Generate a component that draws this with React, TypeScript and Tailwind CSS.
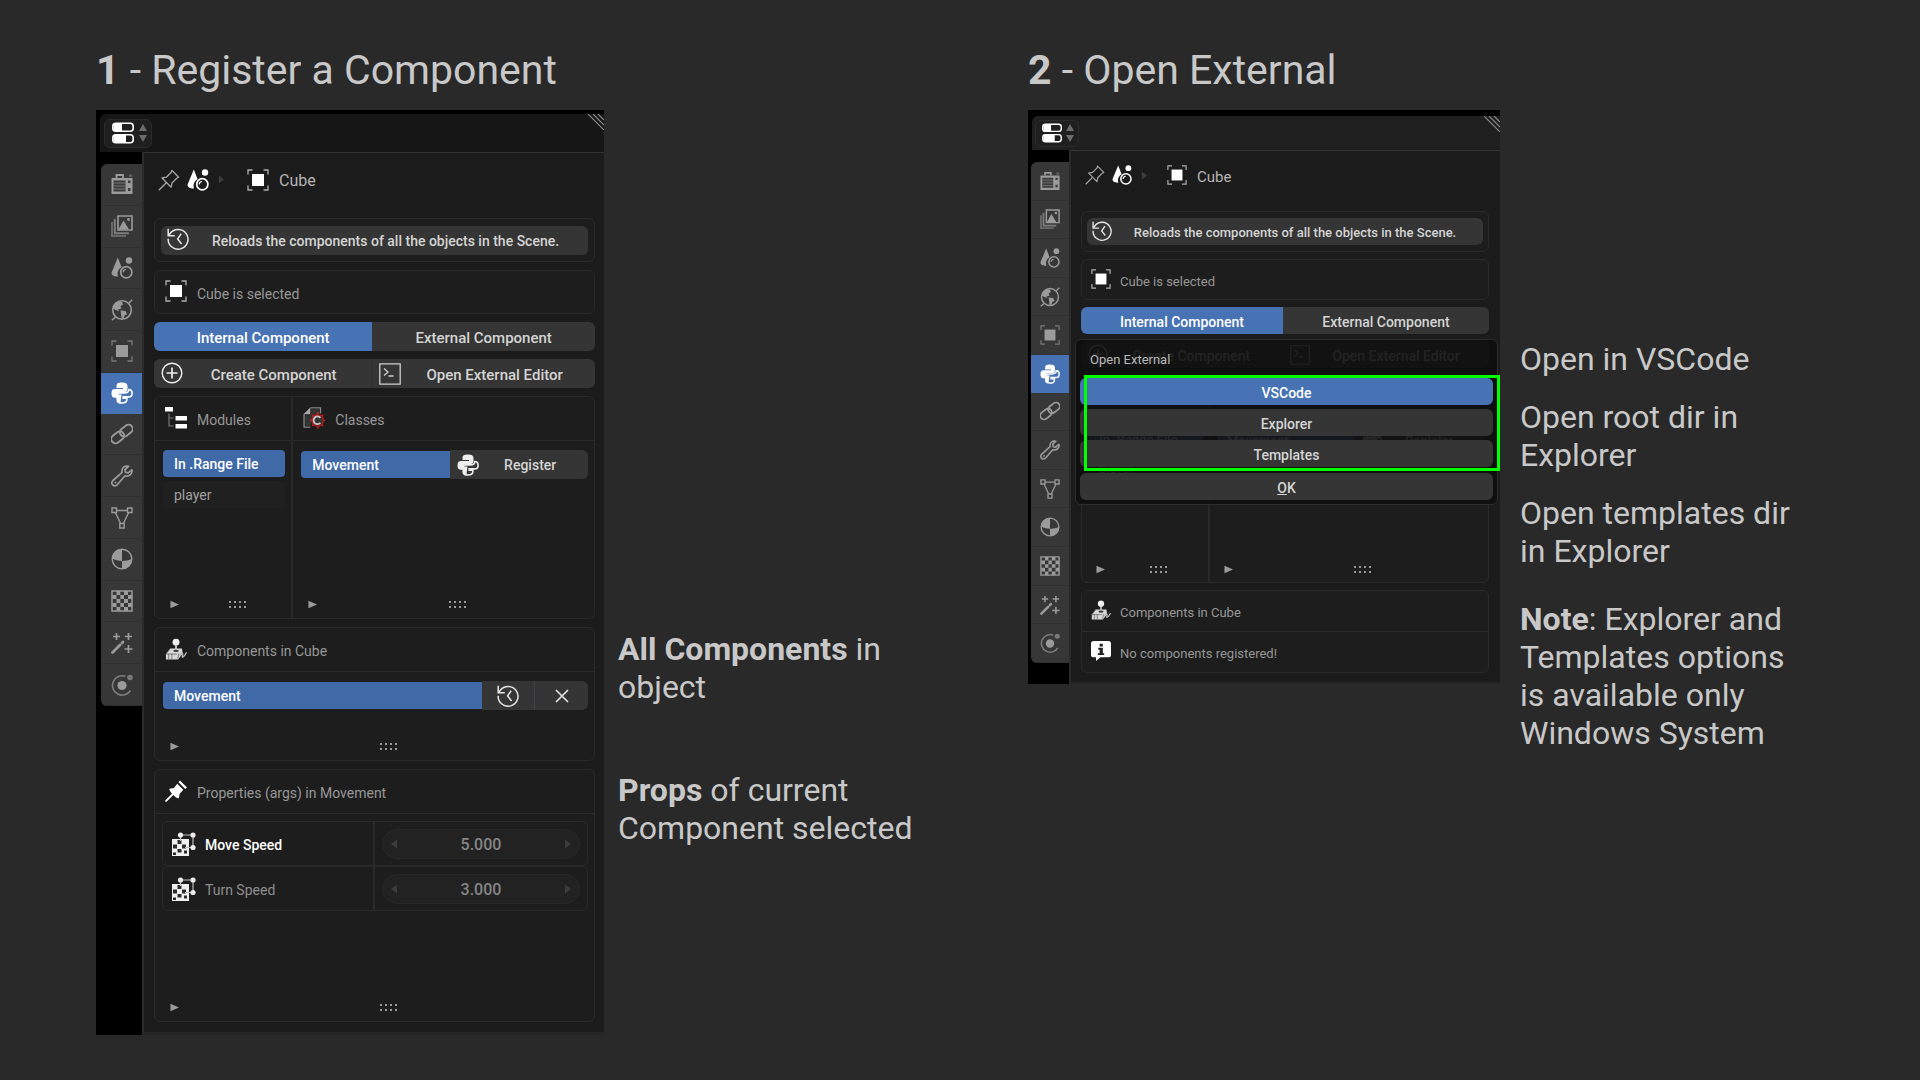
import React from "react";

type IconProps = { className?: string };
type IconType = (p: IconProps) => React.ReactElement;

function Svg({ className, children, box = 22 }: { className?: string; children: React.ReactNode; box?: number }) {
  return (
    <svg viewBox={`0 0 ${box} ${box}`} fill="none" stroke="none" aria-hidden="true" className={`shrink-0 ${className ?? ""}`}>
      {children}
    </svg>
  );
}

/* ---------- sidebar icons ---------- */

const RenderIcon: IconType = (p) => (
  <Svg {...p}>
    <path d="M5.500 5V2h6.500v3" stroke="currentColor" strokeWidth="1.800" />
    <path d="M0.500 5h21V21h-21z" fill="currentColor" />
    <path d="M2.500 7.500h12v11h-12zM17 7.500h2.500V10H17zM17 15h2.500v3H17z" fill="#3c3c3c" />
    <path d="M2.500 10h12M2.500 13h12M2.500 16h12" stroke="currentColor" strokeWidth="0.600" />
    <path d="M18 1.500h3v2.500h-3z" fill="currentColor" opacity="0.400" />
  </Svg>
);

const ViewLayerIcon: IconType = (p) => (
  <Svg {...p}>
    <path d="M1 7v14h14" stroke="currentColor" strokeWidth="2" opacity="0.500" />
    <path d="M3.800 4v14.200h14" stroke="currentColor" strokeWidth="2" opacity="0.700" />
    <path d="M7 1h14v14H7z" stroke="currentColor" strokeWidth="1.600" />
    <path d="M7.500 14.500l5-9 5.500 9z" fill="currentColor" />
    <circle cx="17.500" cy="4.500" r="1.400" fill="currentColor" />
  </Svg>
);

const SceneIcon: IconType = (p) => (
  <Svg {...p}>
    <path d="M6.800 0.500L0.600 15.500c-.5 3 3.400 4.300 6.400 4-1.200-4 .3-7.600 3.600-9.300z" fill="currentColor" />
    <circle cx="18" cy="3.500" r="3.200" fill="currentColor" />
    <circle cx="15.300" cy="15.300" r="5.600" stroke="currentColor" strokeWidth="1.700" />
    <path d="M12.200 15.500a3.200 3.200 0 0 1 2.800-3.200" stroke="currentColor" strokeWidth="1.200" />
  </Svg>
);

const WorldIcon: IconType = (p) => (
  <Svg {...p}>
    <circle cx="11" cy="11" r="9.300" stroke="currentColor" strokeWidth="1.600" />
    <path d="M3.500 5.500L8 2.200l3 .8 1 2.500L9.500 7l1 2.500L7 10.500l1.200 2L5 11 2 9.500zM9.500 11.500l5 .5 1.500 3.500-2.500 1-1 3.500-2-1z" fill="currentColor" />
    <path d="M0.800 21.200l3.500-3M18 4l3.200-3.200" stroke="currentColor" strokeWidth="1.500" />
  </Svg>
);

const ObjectIcon: IconType = (p) => (
  <Svg {...p}>
    <path d="M5 5h12v12H5z" fill="currentColor" />
    <path d="M1 5.500V1h4.500M16.500 1H21v4.500M21 16.500V21h-4.500M5.500 21H1v-4.500" stroke="currentColor" strokeWidth="1.300" opacity="0.650" />
  </Svg>
);

const PythonIcon: IconType = (p) => (
  <Svg {...p}>
    <path d="M11 .5C7 .5 5.500 1.500 5.500 4v2H12v1H4C1.500 7 .5 8.500 .5 11.200c0 3 1 4.600 3.500 4.600h2V13c0-2 1.300-3 3-3h4.500c2 0 3-1.200 3-3V4c0-2.500-2-3.500-5.500-3.500z" fill="currentColor" />
    <path d="M17.800 7.500c2.400 0 3.300 1.300 3.300 3.700 0 2.500-1 3.700-3.400 3.700h-5.500v1.300h3.600v1.600c0 2.200-1.600 3.200-4.800 3.200-3.400 0-4.800-1-4.800-3v-4.800c0-1.400.8-2.300 2.500-2.300h4.500c2.800 0 4.600-1.400 4.600-3.400z" stroke="currentColor" strokeWidth="1.600" />
    <path d="M6.500 12.500h4l-1 8c-2-.2-3-1-3-3z" fill="currentColor" />
  </Svg>
);

const LinkIcon: IconType = (p) => (
  <Svg {...p}>
    <g stroke="currentColor" strokeWidth="1.900" transform="rotate(-38 11 11)">
      <rect x="-1.500" y="6.800" width="14" height="8.400" rx="4.200" />
      <rect x="9.500" y="6.800" width="14" height="8.400" rx="4.200" />
    </g>
  </Svg>
);

const WrenchIcon: IconType = (p) => (
  <Svg {...p}>
    <path
      d="M17.500 1.300c-3.400-1-7.300 1.400-6.400 6L2 15.500c-3 3.200.900 7.200 4.200 4.300l7.800-9c4.600 1.200 7.700-2.600 6.800-6l-3.600 3.100-2.700-.6-.5-2.700z"
      stroke="currentColor"
      strokeWidth="1.700"
      strokeLinejoin="round"
    />
    <circle cx="4.500" cy="17.500" r="1" fill="currentColor" />
  </Svg>
);

const MeshIcon: IconType = (p) => (
  <Svg {...p}>
    <path d="M5.500 3.500h11M4.500 5.800l5 10.500M17.500 5.800l-5 10.500" stroke="currentColor" strokeWidth="1.400" />
    <path d="M1 1h4.500v4.500H1zM16.500 1H21v4.500h-4.500zM8.800 16.500h4.400V21H8.800z" stroke="currentColor" strokeWidth="1.400" />
  </Svg>
);

const MaterialIcon: IconType = (p) => (
  <Svg {...p}>
    <circle cx="11" cy="11" r="9.800" stroke="currentColor" strokeWidth="1.400" />
    <path d="M11 1.200V13C7.500 12.800 4 12.300 1.200 10.500 1.400 5.500 5.500 1.200 11 1.200zM11 20.800V13c3.500 0 7-.7 9.800-2.200.2 5.500-4.300 10-9.800 10z" fill="currentColor" />
  </Svg>
);

const TextureIcon: IconType = (p) => (
  <Svg {...p}>
    <path d="M1 1h20v20H1z" stroke="currentColor" strokeWidth="1.500" />
    <path
      d="M5.500 1h3.800v4H5.500zM13 1h4v4h-4zM1.500 5h4v4h-4zM9.300 5H13v4H9.300zM17 5h4v4h-4zM5.500 9h3.800v4H5.500zM13 9h4v4h-4zM1.500 13h4v4h-4zM9.300 13H13v4H9.300zM17 13h4v4h-4zM5.500 17h3.800v4H5.500zM13 17h4v4h-4z"
      fill="currentColor"
    />
  </Svg>
);

const ParticlesIcon: IconType = (p) => (
  <Svg {...p}>
    <path d="M1.500 20.500l7.500-7.500" stroke="currentColor" strokeWidth="2.800" strokeLinecap="round" />
    <path d="M11 11l1-1" stroke="currentColor" strokeWidth="2.800" strokeLinecap="round" />
    <path d="M5.500 1v7M2 4.500h7M17.500 1v7M14 4.500h7M17.500 13v8M13.500 17h8" stroke="currentColor" strokeWidth="1.700" />
  </Svg>
);

const PhysicsIcon: IconType = (p) => (
  <Svg {...p}>
    <circle cx="11" cy="11.500" r="4.600" fill="currentColor" />
    <path d="M14.500 2.300A9.700 9.700 0 1 0 19.500 16.500" stroke="currentColor" strokeWidth="1.600" opacity="0.700" />
    <circle cx="19" cy="3.500" r="2.800" fill="currentColor" opacity="0.650" />
  </Svg>
);

/* ---------- content icons ---------- */

const EditorIcon: IconType = (p) => (
  <Svg {...p}>
    <rect x="0.800" y="1.300" width="20.400" height="7.900" rx="3" stroke="currentColor" strokeWidth="1.600" />
    <path d="M3 1.500h7v7.500H3C1 9 1 1.500 3 1.500z" fill="currentColor" />
    <rect x="0.800" y="12.800" width="20.400" height="7.900" rx="3" stroke="currentColor" strokeWidth="1.600" />
    <path d="M3 13h11v7.500H3C1 20.500 1 13 3 13z" fill="currentColor" />
  </Svg>
);

const PinOutlineIcon: IconType = (p) => (
  <Svg {...p}>
    <path d="M13.800 1.300l6.900 6.900-1.700.8-5 5-.8 4.200L4 9l4.300-.8 5-5z" stroke="currentColor" strokeWidth="1.300" strokeLinejoin="round" />
    <path d="M0.800 21.200l7.500-7.500" stroke="currentColor" strokeWidth="1.300" />
  </Svg>
);

const PinFilledIcon: IconType = (p) => (
  <Svg {...p}>
    <path d="M15 0.500l7 7-1.800 1.500-6.700-6.800z" fill="currentColor" />
    <path d="M12.200 3.700l6.100 6.100-3.600 3.900-.8 4.300c-1.300 2-10.500-7-9.500-9.300L9 8z" fill="currentColor" />
    <path d="M0.500 21.500l8-8" stroke="currentColor" strokeWidth="1.800" />
  </Svg>
);

const HistoryIcon: IconType = (p) => (
  <Svg {...p}>
    <path d="M1.200 10.800A9.900 9.900 0 1 0 3.300 5.200L1.500 7.500" stroke="currentColor" strokeWidth="1.500" />
    <path d="M1.200 0.800v7h6.600" stroke="currentColor" strokeWidth="1.500" />
    <path d="M14.200 5.600L10.600 11l4 5" stroke="currentColor" strokeWidth="1.500" />
  </Svg>
);

const PlusCircleIcon: IconType = (p) => (
  <Svg {...p}>
    <circle cx="11" cy="11" r="9.800" stroke="currentColor" strokeWidth="1.400" />
    <path d="M11 5.500v11M5.500 11h11" stroke="currentColor" strokeWidth="1.700" />
  </Svg>
);

const ConsoleIcon: IconType = (p) => (
  <Svg {...p}>
    <path d="M0.800 0.800h20.400v20.400H0.800z" stroke="currentColor" strokeWidth="1.300" />
    <path d="M5 5.500l4 3.500-4 3.500M9.500 13h5" stroke="currentColor" strokeWidth="1.300" />
  </Svg>
);

const TreeIcon: IconType = (p) => (
  <Svg {...p}>
    <path d="M0 0h8v4.500H0zM10.500 9H22v4.500H10.500zM10.500 17H22v4.500H10.500z" fill="#fff" />
    <path d="M4 6.500v12.500h4.500M4 11h4.500" stroke="#777" strokeWidth="1.200" />
  </Svg>
);

const ClassIcon: IconType = (p) => (
  <Svg {...p} box={24}>
    <path d="M8 1h11v6M1.200 8v14H8" stroke="#8a8a8a" strokeWidth="1.500" />
    <path d="M8 0.500v7.500H0.500z" fill="#a8a8a8" />
    <path d="M2 9h6l1-7h9v5l-7 4-3 10H2z" fill="#333" />
    <path d="M16 5.500v18M7.500 14.500h17M10 8.500l12 12M22 8.500l-12 12" stroke="#c81e1e" strokeWidth="2" />
    <circle cx="16" cy="14.500" r="6.300" fill="#333" stroke="#b81a1a" strokeWidth="1.400" />
    <path d="M19 11.800a4.200 4.200 0 1 0 0 5.400" stroke="#c4c4c4" strokeWidth="2" />
  </Svg>
);

const JoystickIcon: IconType = (p) => (
  <Svg {...p} box={24}>
    <circle cx="12" cy="4.500" r="3.800" fill="#eee" />
    <circle cx="10.800" cy="3.500" r="1.300" fill="#fff" />
    <path d="M12 8v6" stroke="#ddd" strokeWidth="1.800" />
    <path d="M5.500 11.500h13l.8 5.500-5 6.500H1v-6z" fill="#d8d8d8" />
    <path d="M1 17.500l4.500-5.500M4 23v-5.500M7.500 23v-6M1 17.500h12M14 22.500l1-5.500" stroke="#5a5a5a" strokeWidth="0.800" />
    <ellipse cx="12" cy="14" rx="3" ry="1.300" fill="#3a3a3a" />
    <path d="M16 19.500c2-5 4-3 3 0s2 1 4.500-4" stroke="#bbb" strokeWidth="1.400" />
  </Svg>
);

const NodeTextureIcon: IconType = (p) => (
  <Svg {...p} box={24}>
    <path d="M0 7h17v17H0z" fill="#f0f0f0" />
    <path d="M5.500 8h4v4h-4zM1 12.500h4v4H1zM10 12.500h4v4h-4zM5.500 17h4v3.500h-4zM12 18.500h3v3h-3zM1 20.500h3v2.500H1z" fill="#2c2c2c" />
    <path d="M8.500 3h12.500v12.500h-8M8.500 3v6" stroke="#bdbdbd" strokeWidth="1.200" />
    <circle cx="8.500" cy="3" r="2.600" fill="#ececec" />
    <circle cx="21" cy="3" r="2.600" fill="#ececec" />
    <circle cx="21" cy="15.500" r="2.600" fill="#ececec" />
  </Svg>
);

const InfoIcon: IconType = (p) => (
  <Svg {...p}>
    <path d="M3 0h16c2 0 3 1 3 3v12c0 2-1 3-3 3h-8.500L5.500 22v-4H3c-2 0-3-1-3-3V3c0-2 1-3 3-3z" fill="#fff" />
    <path d="M9.500 3h3.500v3H9.500zM8 7.500h5v6h1.500v2h-7v-2h2v-4H8z" fill="#222" />
  </Svg>
);

const CloseIcon: IconType = (p) => (
  <Svg {...p}>
    <path d="M5 5l12 12M17 5L5 17" stroke="currentColor" strokeWidth="1.600" />
  </Svg>
);

const TriangleRight: IconType = (p) => (
  <Svg {...p} box={10}>
    <path d="M0.500 0.800l9.500 4.200-9.500 4.200z" fill="currentColor" />
  </Svg>
);

const TriangleLeft: IconType = (p) => (
  <Svg {...p} box={10}>
    <path d="M8 0.500v9L2 5z" fill="currentColor" />
  </Svg>
);

const StepRight: IconType = (p) => (
  <Svg {...p} box={10}>
    <path d="M2 0.500v9L8 5z" fill="currentColor" />
  </Svg>
);

function Grip() {
  return (
    <svg viewBox="0 0 17 7" aria-hidden="true" className="h-[7px] w-[17px] text-[#9a9a9a]">
      {[0, 5, 10, 15].map((x) => (
        <g key={x} fill="currentColor">
          <rect x={x} y="0" width="2" height="2" />
          <rect x={x} y="5" width="2" height="2" />
        </g>
      ))}
    </svg>
  );
}

/* ---------- sizing of the two editors ---------- */

const LARGE = {
  top: "pt-1",
  header: "h-[38px] pl-1",
  headerBtn: "h-[29px] w-[48px] pl-[7px] gap-[5px]",
  headerBg: "bg-[#161616]",
  icon: "size-[22px]",
  rail: "w-[46px] pt-[12px] pl-[5px]",
  tabs: "h-[542px]",
  crumbs: "h-[65px] -mb-2 pb-3",
  crumbGap: "ml-[21px]",
  crumbText: "text-[16px]",
  btnText: "text-[15px]",
  text: "text-[14px]",
  body: "gap-2 pl-[10px] pr-[9px] pb-[10px] border-b-[3px]",
  row: "h-[29px]",
  group: "h-[44px]",
  groupPad: "px-[6px]",
  head: "h-[43px] pl-[10px] gap-[10px]",
  listPad: "pl-[8px] pr-[6px] pt-[9px]",
  item: "h-[27px] pl-[11px]",
  foot: "h-[27px]",
  footArrow: "left-[15px]",
  modules: "h-[223px]",
};

const SMALL: typeof LARGE = {
  top: "pt-[6px]",
  header: "h-[34px] pl-[3px]",
  headerBtn: "h-[27px] w-[44px] pl-[6px] gap-[4px]",
  headerBg: "bg-[#1f1f1f]",
  icon: "size-[20px]",
  rail: "w-[41px] pt-[12px] pl-[3px]",
  tabs: "h-[501px]",
  crumbs: "h-[60px] -mb-[7px] pb-3",
  crumbGap: "ml-[18px]",
  crumbText: "text-[15px]",
  btnText: "text-[14px]",
  text: "text-[13px]",
  body: "gap-[7px] pl-[10px] pr-[11px] pb-[9px] border-b-2",
  row: "h-[27px]",
  group: "h-[41px]",
  groupPad: "px-[5px]",
  head: "h-[40px] pl-[9px] gap-[9px]",
  listPad: "pl-[7px] pr-[5px] pt-[9px]",
  item: "h-[25px] pl-[10px]",
  foot: "h-[25px]",
  footArrow: "left-[14px]",
  modules: "h-[208px]",
};

type Size = typeof LARGE;

/* ---------- shared parts ---------- */

const TABS: { name: string; Icon: IconType }[] = [
  { name: "Render", Icon: RenderIcon },
  { name: "View Layer", Icon: ViewLayerIcon },
  { name: "Scene", Icon: SceneIcon },
  { name: "World", Icon: WorldIcon },
  { name: "Object", Icon: ObjectIcon },
  { name: "Python", Icon: PythonIcon },
  { name: "Constraints", Icon: LinkIcon },
  { name: "Modifiers", Icon: WrenchIcon },
  { name: "Data", Icon: MeshIcon },
  { name: "Material", Icon: MaterialIcon },
  { name: "Texture", Icon: TextureIcon },
  { name: "Particles", Icon: ParticlesIcon },
  { name: "Physics", Icon: PhysicsIcon },
];

function Editor({ s, children, overlay }: { s: Size; children: React.ReactNode; overlay?: React.ReactNode }) {
  return (
    <section className={`flex flex-col bg-black ${s.top} ${s.text}`}>
      <header className={`relative ml-1 flex items-center rounded-tl-md ${s.headerBg} ${s.header}`}>
        <button aria-label="Editor type" className={`flex items-center rounded-md border border-[#2b2b2b] bg-[#1f1f1f] text-white ${s.headerBtn}`}>
          <EditorIcon className={s.icon} />
          <svg viewBox="0 0 8 20" aria-hidden="true" className="h-5 w-2 text-[#6c6c6c]">
            <path d="M4 1l4 7H0zM4 19l4-7H0z" fill="currentColor" />
          </svg>
        </button>
        <svg viewBox="0 0 16 16" aria-hidden="true" className="absolute top-0 right-0 size-4">
          <path d="M0 0l16 16M5 0l11 11M10 0l6 6" stroke="#8a8a8a" strokeWidth="1.200" />
        </svg>
      </header>
      <div className="flex">
        <nav aria-label="Properties tabs" className={`shrink-0 ${s.rail}`}>
          <div className={`flex flex-col overflow-hidden rounded-l-md bg-[#373737] ${s.tabs}`}>
            {TABS.map(({ name, Icon }) => (
              <button
                key={name}
                aria-label={name}
                className={
                  name === "Python"
                    ? "flex flex-1 items-center justify-center bg-[#4772b3] text-white"
                    : "flex flex-1 items-center justify-center border-b border-[#303030] text-[#9b9b9b]"
                }
              >
                <Icon className={s.icon} />
              </button>
            ))}
          </div>
        </nav>
        <div className={`relative flex min-w-0 flex-1 flex-col border-t border-l-2 border-t-[#333] border-b-[#262626] border-l-[#2b2b2b] bg-[#1b1b1b] ${s.body}`}>
          {children}
          {overlay}
        </div>
      </div>
    </section>
  );
}

function Intro({ s }: { s: Size }) {
  return (
    <>
      <div className={`flex items-center pl-1 ${s.crumbs}`}>
        <button aria-label="Pin" className="text-[#a5a5a5]">
          <PinOutlineIcon className={s.icon} />
        </button>
        <SceneIcon className={`ml-[7px] text-white ${s.icon}`} />
        <StepRight className="ml-2 size-[9px] text-[#3c3c3c]" />
        <ObjectIcon className={`text-white ${s.icon} ${s.crumbGap}`} />
        <span className={`ml-[10px] pt-[3px] leading-5 text-[#b5b5b5] ${s.crumbText}`}>Cube</span>
      </div>
      <div className={`flex items-center rounded-md border border-[#292929] bg-[#1d1d1d] ${s.group} ${s.groupPad}`}>
        <button className={`flex flex-1 items-center rounded-md bg-[#353535] text-[#d4d4d4] ${s.row} ${s.groupPad}`}>
          <HistoryIcon className={`-mt-0.5 text-[#e6e6e6] ${s.icon}`} />
          <span className="flex-1 pt-[3px] text-center font-medium whitespace-nowrap">Reloads the components of all the objects in the Scene.</span>
        </button>
      </div>
      <div className={`flex items-center rounded-md border border-[#292929] bg-[#1d1d1d] text-[#979797] ${s.group}`}>
        <Head s={s} Icon={ObjectIcon} label="Cube is selected" />
      </div>
      <div className={`flex font-medium text-[#d4d4d4] ${s.row} ${s.btnText}`}>
        <button className="w-[49.5%] rounded-l-md bg-[#4772b3] pt-[3px] text-white">Internal Component</button>
        <button className="flex-1 rounded-r-md bg-[#353535] pt-[3px]">External Component</button>
      </div>
      <div className={`flex font-medium text-[#d4d4d4] ${s.row} ${s.btnText}`}>
        <button className="flex w-[49.5%] items-center rounded-l-md border-r border-[#303030] bg-[#353535] px-[7px]">
          <PlusCircleIcon className={`-mt-px text-[#eee] ${s.icon}`} />
          <span className="flex-1 pt-[3px] text-center">Create Component</span>
        </button>
        <button className="flex flex-1 items-center rounded-r-md bg-[#353535] px-[7px]">
          <ConsoleIcon className={`text-[#d0d0d0] ${s.icon}`} />
          <span className="flex-1 pt-[3px] text-center">Open External Editor</span>
        </button>
      </div>
    </>
  );
}

function Head({ s, Icon, label }: { s: Size; Icon: IconType; label: string }) {
  return (
    <div className={`flex shrink-0 items-center text-[#979797] ${s.head}`}>
      <Icon className={`-mt-0.5 text-white ${s.icon}`} />
      <span className="pt-1">{label}</span>
    </div>
  );
}

function Foot({ s }: { s: Size }) {
  return (
    <div className={`relative mt-auto flex shrink-0 items-center justify-center pl-7 ${s.foot}`}>
      <TriangleRight className={`absolute size-[9px] text-[#9a9a9a] ${s.footArrow}`} />
      <Grip />
    </div>
  );
}

function Modules({ s }: { s: Size }) {
  return (
    <div className={`flex overflow-hidden rounded-md border border-[#292929] bg-[#1d1d1d] ${s.modules}`}>
      <div className="flex w-[31.5%] flex-col border-r-2 border-[#292929]">
        <Head s={s} Icon={TreeIcon} label="Modules" />
        <div className={`flex flex-col gap-1 border-t border-[#2b2b2b] ${s.listPad}`}>
          <button className={`rounded-sm bg-[#4069a8] pt-0.5 text-left font-medium text-white ${s.item}`}>In .Range File</button>
          <button className={`rounded-sm bg-[#202020] pt-0.5 text-left text-[#a0a0a0] ${s.item}`}>player</button>
        </div>
        <Foot s={s} />
      </div>
      <div className="flex flex-1 flex-col">
        <Head s={s} Icon={ClassIcon} label="Classes" />
        <div className={`flex items-center border-t border-[#2b2b2b] font-medium ${s.listPad}`}>
          <button className={`w-[52%] rounded-l-sm bg-[#4069a8] pt-0.5 text-left text-white ${s.item}`}>Movement</button>
          <button className={`flex flex-1 items-center rounded-r-md bg-[#353535] px-[7px] text-[#d4d4d4] ${s.row}`}>
            <PythonIcon className={`text-[#eee] ${s.icon}`} />
            <span className="flex-1 pt-0.5 text-center">Register</span>
          </button>
        </div>
        <Foot s={s} />
      </div>
    </div>
  );
}

function Property({ id, label, value, active }: { id: string; label: string; value: string; active?: boolean }) {
  return (
    <div className="flex h-[45px] rounded-md border border-[#2a2a2a]">
      <label
        htmlFor={id}
        className={
          active
            ? "flex w-1/2 items-center gap-[9px] border-r-2 border-[#2a2a2a] pl-[9px] font-medium text-white"
            : "flex w-1/2 items-center gap-[9px] border-r-2 border-[#2a2a2a] pl-[9px] text-[#8f8f8f]"
        }
      >
        <NodeTextureIcon className="size-6" />
        <span className="pt-1">{label}</span>
      </label>
      <div className="relative flex flex-1 items-center px-[7px]">
        <TriangleLeft className="absolute left-[14px] size-[10px] text-[#3c3c3c]" />
        <input
          id={id}
          type="text"
          defaultValue={value}
          className="h-[30px] w-full rounded-full border border-[#282828] bg-[#222] pt-0.5 text-center text-[16px] font-medium text-[#858585]"
        />
        <StepRight className="absolute right-[14px] size-[10px] text-[#3c3c3c]" />
      </div>
    </div>
  );
}

function RegisterEditor() {
  const s = LARGE;
  return (
    <Editor s={s}>
      <Intro s={s} />
      <Modules s={s} />
      <div className="flex h-[134px] flex-col rounded-md border border-[#292929] bg-[#1d1d1d]">
        <Head s={s} Icon={JoystickIcon} label="Components in Cube" />
        <div className={`flex items-center border-t border-[#2b2b2b] ${s.listPad}`}>
          <button className={`flex-1 rounded-l-sm bg-[#4069a8] pt-0.5 text-left font-medium text-white ${s.item}`}>Movement</button>
          <button aria-label="Reload component" className={`flex w-[52px] items-center justify-center bg-[#353535] text-[#e6e6e6] ${s.row}`}>
            <HistoryIcon className={s.icon} />
          </button>
          <button
            aria-label="Remove component"
            className={`flex w-[54px] items-center justify-center rounded-r-md border-l border-[#42424c] bg-[#353535] text-[#e6e6e6] ${s.row}`}
          >
            <CloseIcon className={s.icon} />
          </button>
        </div>
        <Foot s={s} />
      </div>
      <div className="flex h-[253px] flex-col rounded-md border border-[#292929] bg-[#1d1d1d]">
        <Head s={s} Icon={PinFilledIcon} label="Properties (args) in Movement" />
        <div className="border-t border-[#2b2b2b] pt-[7px] pr-[6px] pl-[7px]">
          <Property id="move-speed" label="Move Speed" value="5.000" active />
          <Property id="turn-speed" label="Turn Speed" value="3.000" />
        </div>
        <Foot s={s} />
      </div>
    </Editor>
  );
}

function OpenExternalPopup() {
  return (
    <div role="dialog" aria-label="Open External" className="absolute top-[188px] right-[2px] left-1 rounded-md border border-[#2e2e2e] bg-[#0e0e0e]/90 px-1 pb-1">
      <h2 className="flex h-[38px] items-center pl-[10px] text-[#b8b8b8]">
        <span className="pt-0.5">Open External</span>
      </h2>
      <div className="flex flex-col gap-1 text-[14px] font-medium text-[#d4d4d4]">
        <button className="h-[27px] rounded-md bg-[#4772b3] pt-[3px] text-white">VSCode</button>
        <button className="h-[27px] rounded-md bg-[#353535] pt-[3px]">Explorer</button>
        <button className="h-[27px] rounded-md bg-[#353535] pt-[3px]">Templates</button>
        <button className="mt-0.5 h-[27px] rounded-md bg-[#353535] pt-[3px]">
          <span className="underline">O</span>K
        </button>
      </div>
      <div className="pointer-events-none absolute top-[35px] -right-[3px] left-2 h-24 border-3 border-[#00ff00]" />
    </div>
  );
}

function ExternalEditor() {
  const s = SMALL;
  return (
    <Editor s={s} overlay={<OpenExternalPopup />}>
      <Intro s={s} />
      <Modules s={s} />
      <div className="flex flex-col rounded-md border border-[#292929] bg-[#1d1d1d]">
        <Head s={s} Icon={JoystickIcon} label="Components in Cube" />
        <div className="border-t border-[#2b2b2b]">
          <Head s={s} Icon={InfoIcon} label="No components registered!" />
        </div>
      </div>
    </Editor>
  );
}

export default function App() {
  return (
    <main className="grid min-h-screen grid-cols-[932fr_892fr] items-start bg-[#292929] pt-[45px] pl-24 font-['Roboto',sans-serif] text-[#c8c8c8]">
      <article>
        <h1 className="mb-[15px] text-[41px] leading-[50px]">
          <b>1</b> - Register a Component
        </h1>
        <div className="grid grid-cols-[508fr_424fr] items-start">
          <RegisterEditor />
          <aside className="max-w-[320px] pt-[520px] pl-[14px] text-[32px] leading-[38px]">
            <p>
              <b>All Components</b> in object
            </p>
            <p className="mt-[65px]">
              <b>Props</b> of current Component selected
            </p>
          </aside>
        </div>
      </article>
      <article>
        <h1 className="mb-[15px] text-[41px] leading-[50px]">
          <b>2</b> - Open External
        </h1>
        <div className="grid grid-cols-[472fr_420fr] items-start">
          <ExternalEditor />
          <aside className="flex max-w-[300px] flex-col gap-5 pt-[230px] pl-5 text-[32px] leading-[38px]">
            <p>Open in VSCode</p>
            <p>Open root dir in Explorer</p>
            <p>Open templates dir in Explorer</p>
            <p className="mt-[10px]">
              <b>Note</b>: Explorer and Templates options is available only Windows System
            </p>
          </aside>
        </div>
      </article>
    </main>
  );
}
